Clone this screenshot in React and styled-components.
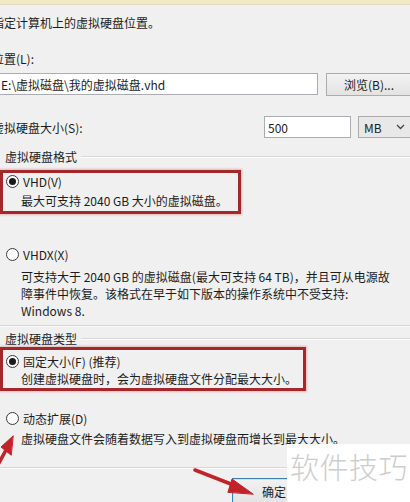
import React from 'react';
import styled, { createGlobalStyle } from 'styled-components';

const GlobalStyle = createGlobalStyle`
  html, body {
    margin: 0;
    padding: 0;
    background: #f0f0f0;
  }
  body {
    font-family: 'Noto Sans CJK SC', 'Noto Sans', sans-serif;
    font-size: 12px;
    line-height: 17px;
    color: #1c1c1c;
  }
`;

const Window = styled.div`
  position: relative;
  width: 410px;
  height: 502px;
  overflow: hidden;
  background: #f0f0f0;
`;

const TopStrip = styled.div`
  height: 4px;
  background: #f1e8c5;
  border-bottom: 1px solid #e2dab8;
`;

const TopSection = styled.div`
  margin-left: -8px;
  width: 426px;
  display: flex;
  flex-direction: column;
`;

const Text = styled.div`
  margin-top: ${(p) => p.$mt || 0}px;
  white-space: nowrap;
`;

const FieldRow = styled.div`
  display: flex;
  align-items: center;
  gap: ${(p) => p.$gap || 8}px;
  margin-top: ${(p) => p.$mt || 0}px;
  height: 22px;
`;

const TextInput = styled.div`
  box-sizing: border-box;
  width: ${(p) => p.$w}px;
  height: 22px;
  padding-left: ${(p) => p.$pl || 4}px;
  background: #fff;
  border: 1px solid #abadb3;
  display: flex;
  align-items: center;
  white-space: nowrap;
  flex-shrink: 0;
`;

const Button = styled.div`
  box-sizing: border-box;
  width: ${(p) => p.$w}px;
  height: ${(p) => p.$h || 23}px;
  display: flex;
  align-items: center;
  justify-content: center;
  flex-shrink: 0;
  background: linear-gradient(#f2f2f2, #e3e3e3);
  border: 1px solid ${(p) => (p.$primary ? '#3c7fb1' : '#acacac')};
  box-shadow: ${(p) => (p.$primary ? 'inset 0 0 0 1px #c5e1f5' : 'none')};
  white-space: nowrap;
`;

const Select = styled.div`
  box-sizing: border-box;
  width: 60px;
  height: 22px;
  display: flex;
  align-items: center;
  justify-content: space-between;
  padding: 0 12px 0 5px;
  background: #e8e8e8;
  border: 1px solid #acacac;
  flex-shrink: 0;
`;

const Spacer = styled.div`
  flex: 1;
  white-space: nowrap;
`;

const GroupHeader = styled.div`
  display: flex;
  align-items: center;
  gap: 4px;
  padding-left: 5px;
  margin-top: ${(p) => p.$mt || 0}px;
  white-space: nowrap;
  &::after {
    content: '';
    flex: 1;
    height: 1px;
    background: #d8d8d8;
    border-bottom: 1px solid #fcfcfc;
  }
`;

const Rule = styled.div`
  height: 1px;
  width: ${(p) => p.$w || 410}px;
  background: #d6d6d6;
  border-bottom: 1px solid #fbfbfb;
  margin-top: ${(p) => p.$mt || 0}px;
`;

const Option = styled.div`
  box-sizing: border-box;
  width: ${(p) => p.$w || 410}px;
  margin-top: ${(p) => p.$mt || 0}px;
  padding: ${(p) => p.$pad || '0 0 0 0'};
  padding-left: 3px;
  border: 3px solid ${(p) => (p.$mark ? '#a3282b' : 'transparent')};
  border-left: 3px solid ${(p) => (p.$mark ? '#a3282b' : 'transparent')};
  box-shadow: ${(p) => (p.$mark ? '0 0 2px 1px rgba(210, 110, 110, 0.45)' : 'none')};
  margin-left: 0;
`;

const RadioRow = styled.div`
  display: flex;
  align-items: center;
  gap: 4px;
  white-space: nowrap;
`;

const RadioDot = styled.span`
  box-sizing: border-box;
  width: 13px;
  height: 13px;
  border-radius: 50%;
  border: 1px solid #3a3a3a;
  background: #fff;
  display: flex;
  align-items: center;
  justify-content: center;
  &::after {
    content: '';
    width: 7px;
    height: 7px;
    border-radius: 50%;
    background: ${(p) => (p.$on ? '#1a1a1a' : 'transparent')};
  }
`;

const Desc = styled.div`
  padding-left: 15px;
  margin-top: ${(p) => p.$mt || 0}px;
  white-space: nowrap;
`;

const ButtonBar = styled.div`
  display: flex;
  padding-left: 232px;
  margin-top: 9px;
`;

const Watermark = styled.div`
  position: absolute;
  left: 287px;
  top: 444px;
  right: 0;
  bottom: 0;
  background: #fff;
  color: #cdcdcd;
  font-size: 29px;
  font-weight: 300;
  line-height: 1;
  padding: 8px 0 0 3px;
  letter-spacing: 0.5px;
  white-space: nowrap;
`;

const Overlay = styled.svg`
  position: absolute;
  left: 0;
  top: 0;
  pointer-events: none;
`;

const Radio = ({ on, children }) => (
  <RadioRow>
    <RadioDot $on={on} />
    <span>{children}</span>
  </RadioRow>
);

const Chevron = () => (
  <svg width="9" height="6" viewBox="0 0 9 6">
    <path d="M1 1l3.5 3.5L8 1" fill="none" stroke="#444" strokeWidth="1.3" />
  </svg>
);

const App = () => {
  return (
    <>
      <GlobalStyle />
      <Window>
        <TopStrip />
        <TopSection>
          <Text $mt={9}>指定计算机上的虚拟硬盘位置。</Text>
          <Text $mt={19}>位置(L):</Text>
          <FieldRow $mt={6}>
            <TextInput $w={326} $pl={8}>E:\虚拟磁盘\我的虚拟磁盘.vhd</TextInput>
            <Button $w={86} $h={23}>浏览(B)...</Button>
          </FieldRow>
          <FieldRow $mt={21} $gap={7}>
            <Spacer>虚拟硬盘大小(S):</Spacer>
            <TextInput $w={87} $pl={3}>500</TextInput>
            <Select>
              <span>MB</span>
              <Chevron />
            </Select>
          </FieldRow>
        </TopSection>

        <GroupHeader $mt={10}>虚拟硬盘格式</GroupHeader>
        <Option $mark $w={241} $mt={5} $pad="0 0 2px 0">
          <Radio on>VHD(V)</Radio>
          <Desc $mt={2}>最大可支持 2040 GB 大小的虚拟磁盘。</Desc>
        </Option>
        <Option $mt={29}>
          <Radio>VHDX(X)</Radio>
          <Desc $mt={5}>可支持大于 2040 GB 的虚拟磁盘(最大可支持 64 TB)，并且可从电源故</Desc>
          <Desc>障事件中恢复。该格式在早于如下版本的操作系统中不受支持:</Desc>
          <Desc>Windows 8.</Desc>
        </Option>

        <Rule $mt={3} />
        <GroupHeader $mt={3}>虚拟硬盘类型</GroupHeader>
        <Option $mark $w={306} $mt={0} $pad="3px 0 1px 0">
          <Radio on>固定大小(F) (推荐)</Radio>
          <Desc>创建虚拟硬盘时，会为虚拟硬盘文件分配最大大小。</Desc>
        </Option>
        <Option $mt={16}>
          <Radio>动态扩展(D)</Radio>
          <Desc $mt={3}>虚拟硬盘文件会随着数据写入到虚拟硬盘而增长到最大大小。</Desc>
        </Option>

        <Rule $mt={17} />
        <ButtonBar>
          <Button $primary $w={84} $h={26}>确定</Button>
        </ButtonBar>

        <Overlay width="410" height="502" viewBox="0 0 410 502">
          <g fill="#c2232a" stroke="#c2232a" strokeLinecap="round">
            <line x1="-6" y1="472" x2="6" y2="450" strokeWidth="3.5" />
            <polygon points="13,436 1,447 11,455" />
            <line x1="195" y1="470" x2="236" y2="486" strokeWidth="3.5" />
            <polygon points="253,494 232,479 228,492" />
          </g>
        </Overlay>

        <Watermark>软件技巧</Watermark>
      </Window>
    </>
  );
};

export default App;
